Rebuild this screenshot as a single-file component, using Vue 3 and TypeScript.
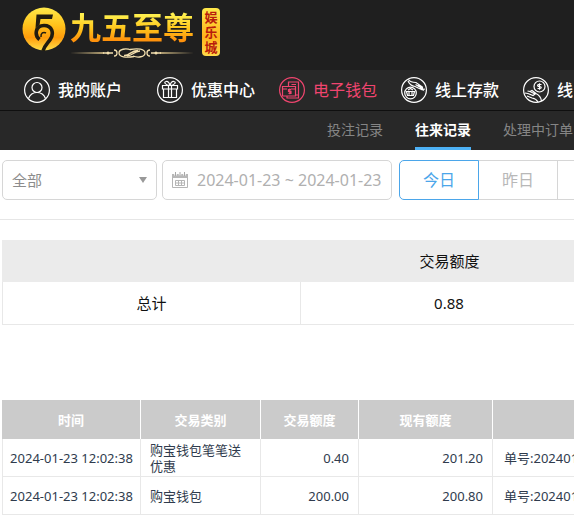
<script setup lang="ts">
import { ref } from 'vue'

interface NavItem { id: string; label: string }
interface Entry { time: string; kind: string; amount: string; balance: string; note: string }

const navItems: NavItem[] = [
  { id: 'account', label: '我的账户' },
  { id: 'promo', label: '优惠中心' },
  { id: 'wallet', label: '电子钱包' },
  { id: 'deposit', label: '线上存款' },
  { id: 'withdraw', label: '线' },
]
const tabs: string[] = ['投注记录', '往来记录', '处理中订单']
const days: string[] = ['今日', '昨日', '']
const entries: Entry[] = [
  { time: '2024-01-23 12:02:38', kind: '购宝钱包笔笔送优惠', amount: '0.40', balance: '201.20', note: '单号:202401' },
  { time: '2024-01-23 12:02:38', kind: '购宝钱包', amount: '200.00', balance: '200.80', note: '单号:202401' },
]

const activeNav = ref('wallet')
const activeTab = ref('往来记录')
const activeDay = ref('今日')
const category = ref('全部')
const range = ref('2024-01-23 ~ 2024-01-23')
</script>

<template>
  <div class="page">
    <header class="top">
      <a class="logo" href="#">
        <svg class="mark" viewBox="0 0 44 44" aria-hidden="true">
          <defs>
            <linearGradient id="gold" x1="0" y1="0" x2="0" y2="1">
              <stop offset="0" stop-color="#ffe94a" />
              <stop offset="0.4" stop-color="#ffc31c" />
              <stop offset="0.7" stop-color="#ff9c0c" />
              <stop offset="1" stop-color="#ffe04a" />
            </linearGradient>
          </defs>
          <circle cx="22" cy="22" r="21.5" fill="url(#gold)" />
          <path d="M14.500 7.500H31L30 12H18.500L17.500 18C15.500 19 14.500 20 13.500 21Z" fill="#211c10" />
          <path d="M17.500 32.500C12 28 13.500 18.500 22 18.500C30.500 18.500 32 26.500 28.500 32C26 36 22.500 38.500 21 44" fill="none" stroke="#211c10" stroke-width="3.600" />
          <path d="M19 30C18.500 26 21.500 24.500 24 26" fill="none" stroke="#211c10" stroke-width="1.500" />
        </svg>
        <span class="brand">
          <span class="name">九五至尊</span>
          <svg class="flourish" viewBox="0 0 124 10" aria-hidden="true">
            <path d="M0 5L34 4.300V5.700ZM124 5L90 4.300V5.700Z" fill="#e9cf92" />
            <g fill="none" stroke="#f3dfae" stroke-width="1.300">
              <path d="M33 5H43M81 5H91M44 2C48 2 48 8 44 8M80 2C76 2 76 8 80 8" />
              <path d="M64 8.500C56 10 49 9 49 5S56 0 61 2M60 1.500C68 0 75 1 75 5S68 10 63 8" />
              <path d="M54 7.500C60 8 61 2 68 2.500M57 8C62 8 64 3 70 3" />
            </g>
            <circle cx="38" cy="5" r="1.500" fill="#f3dfae" />
            <circle cx="86" cy="5" r="1.500" fill="#f3dfae" />
          </svg>
        </span>
        <span class="seal">娱乐城</span>
      </a>
    </header>

    <nav class="main-nav">
      <a
        v-for="item in navItems"
        :key="item.id"
        href="#"
        :class="['nav-link', item.id, { active: item.id === activeNav }]"
        @click.prevent="activeNav = item.id"
      >
        <svg class="nav-icon" viewBox="0 0 26 26" aria-hidden="true">
          <circle cx="13" cy="13" r="12.400" />
          <g v-if="item.id === 'account'">
            <circle cx="13" cy="10.500" r="5" />
            <path d="M4.500 21.500C6 17.500 9 15.500 13 15.500S20 17.500 21.500 21.500" />
          </g>
          <g v-else-if="item.id === 'promo'">
            <path d="M5.500 8.500H20.500V12H5.500ZM6.500 12V20.500H19.500V12M11.500 8.500V20.500M14.500 8.500V20.500" />
            <path d="M13 8.500C8 8 6.500 5 9 4.500C11 4 12.500 6 13 8.500C13.500 6 15 4 17 4.500C19.500 5 18 8 13 8.500" />
          </g>
          <g v-else-if="item.id === 'wallet'">
            <path d="M3.500 9.500H16.500V19H3.500ZM3.500 12H8M12 12H16.500M9.500 9.500V5H19.500V21H8V19M12.500 7.500H17M16.500 18H19.500" />
            <path d="M12 12.500H9.500V14.300H12V16.300H9.500M10.800 11.500V17.300" />
          </g>
          <g v-else-if="item.id === 'deposit'">
            <circle cx="9.500" cy="16" r="5.800" />
            <path d="M5.500 14.500H13.500L12.500 18.500H6.500ZM8 14.500V18.500M11 14.500V18.500M7 13L9.500 11.500L12 13" />
            <path d="M7.500 2.500C9 5 11 5.500 15 5.500L22 10.500M7 4C8.500 7.500 11 9 14 9.500L20.500 12.500L19.500 10.500L14.500 7.500M19.500 10.500L22 12.500L21 10L17 7.500M22 12.500L24 12" />
          </g>
          <g v-else>
            <circle cx="16.500" cy="9.500" r="5.500" />
            <path d="M18.500 7.500H15.500C14 8 14.500 9.500 16.500 9.500C19 9.800 18.500 11.500 17 11.500H14.500M16.500 6.300V12.700" />
            <path d="M2 16L5 16.500L10 18.500L12 17L7 14.500L4.500 14M7 14.500L9 13.500L13 16.500C16 18 18 20 18.500 24M4 19L9 21C12 21.500 14 23 15 25" />
          </g>
        </svg>
        <span>{{ item.label }}</span>
      </a>
    </nav>

    <nav class="sub-nav">
      <a
        v-for="tab in tabs"
        :key="tab"
        href="#"
        :class="['tab', { active: tab === activeTab }]"
        @click.prevent="activeTab = tab"
      >{{ tab }}</a>
    </nav>

    <main class="content">
      <form class="filters" @submit.prevent>
        <label class="field category">
          <select v-model="category" aria-label="全部">
            <option>全部</option>
          </select>
          <svg class="caret" viewBox="0 0 8 6" aria-hidden="true"><path d="M0 0H8L4 6Z" /></svg>
        </label>
        <label class="field range">
          <svg class="calendar" viewBox="0 0 18 18" aria-hidden="true">
            <path d="M1.500 3.500H16.500V16.500H1.500Z" fill="none" stroke="#b5b5b5" />
            <path d="M1 3H17V7H1Z" fill="#b8b8b8" />
            <path d="M4.500 1V4.500M9 1V4.500M13.500 1V4.500" stroke="#fff" stroke-width="2.500" />
            <path d="M4.500 1V5M9 1V5M13.500 1V5" stroke="#a8a8a8" />
            <path d="M4.500 9.500H13.500V14.500H4.500ZM4.500 12H13.500M7.500 9.500V14.500M10.500 9.500V14.500" fill="none" stroke="#b5b5b5" />
          </svg>
          <input v-model="range" type="text" aria-label="2024-01-23 ~ 2024-01-23" />
        </label>
        <div class="days">
          <button
            v-for="day in days"
            :key="day"
            type="button"
            :class="['day', { active: day === activeDay }]"
            @click="activeDay = day"
          >{{ day }}</button>
        </div>
      </form>

      <table class="summary">
        <colgroup><col class="w-total" /><col class="w-value" /></colgroup>
        <thead>
          <tr><th></th><th>交易额度</th></tr>
        </thead>
        <tbody>
          <tr><td>总计</td><td>0.88</td></tr>
        </tbody>
      </table>

      <table class="records">
        <colgroup>
          <col class="w-time" /><col class="w-kind" /><col class="w-amount" /><col class="w-balance" /><col class="w-note" />
        </colgroup>
        <thead>
          <tr><th>时间</th><th>交易类别</th><th>交易额度</th><th>现有额度</th><th></th></tr>
        </thead>
        <tbody>
          <tr v-for="(entry, i) in entries" :key="i">
            <td class="time">{{ entry.time }}</td>
            <td class="kind">{{ entry.kind }}</td>
            <td class="num">{{ entry.amount }}</td>
            <td class="num">{{ entry.balance }}</td>
            <td class="note">{{ entry.note }}</td>
          </tr>
        </tbody>
      </table>
    </main>
  </div>
</template>

<style>
body {
  background: #fff;
  overflow-x: hidden;
}
</style>

<style scoped>
.page {
  overflow: hidden;
  font-family: "Noto Sans", "Noto Sans CJK SC", sans-serif;
  color: #111;
}
.page * {
  box-sizing: border-box;
}
a {
  text-decoration: none;
  color: inherit;
}
.top {
  height: 70px;
  padding: 7px 22px;
  background: #1f1f1f;
}
.logo {
  display: flex;
  align-items: flex-start;
}
.mark {
  width: 44px;
  height: 44px;
  flex: none;
}
.brand {
  display: flex;
  flex-direction: column;
  margin-left: 4px;
}
.name {
  height: 39px;
  font: 700 31px/38px "Noto Sans CJK SC", sans-serif;
  color: transparent;
  background: linear-gradient(#fff04e 20%, #ffc61c 55%, #ff920c 85%);
  background-clip: text;
}
.flourish {
  width: 124px;
  height: 10px;
  margin-top: 2px;
}
.seal {
  width: 18px;
  height: 48px;
  padding-top: 1px;
  margin: 1px 0 0 8px;
  border-radius: 4px;
  background: linear-gradient(#ffe94a, #ffb31c 60%, #ffd94a);
  color: #b81c0c;
  font: 700 13px/15px "Noto Sans CJK SC", sans-serif;
  text-align: center;
  word-break: break-all;
}
.main-nav {
  display: flex;
  align-items: center;
  gap: 24px;
  height: 41px;
  padding-left: 24px;
  background: #282828;
  border-bottom: 1px solid #0f0f0f;
}
.nav-link {
  display: flex;
  align-items: center;
  gap: 8px;
  flex: none;
  color: #fff;
  font-size: 16px;
  font-weight: 500;
  line-height: 24px;
}
.nav-link.account {
  margin-right: 11px;
}
.nav-link.active {
  color: #f0456f;
  font-weight: 400;
}
.nav-icon {
  width: 26px;
  height: 26px;
  fill: none;
  stroke: currentColor;
  stroke-width: 1.2;
}
.sub-nav {
  display: flex;
  gap: 32px;
  height: 39px;
  padding-left: 327px;
  background: #282828;
}
.tab {
  flex: none;
  color: #858585;
  font-size: 14px;
  line-height: 38px;
}
.tab.active {
  color: #fff;
  font-weight: 700;
  border-bottom: 3px solid #4db1f5;
}
.content {
  padding: 10px 0 0 2px;
}
.filters {
  display: flex;
  margin-left: -2px;
  padding: 0 0 19px 2px;
  border-bottom: 1px solid #e6e6e6;
}
.field {
  display: flex;
  align-items: center;
  flex: none;
  height: 40px;
  border: 1px solid #d6d6d6;
  border-radius: 5px;
  background: #fff;
}
.category {
  width: 155px;
  margin-right: 5px;
  padding: 0 9px;
}
.category select {
  flex: 1;
  min-width: 0;
  padding: 0;
  border: 0;
  appearance: none;
  background: none;
  color: #8c8c8c;
  font: 15px/24px "Noto Sans", "Noto Sans CJK SC", sans-serif;
}
.caret {
  width: 8px;
  height: 6px;
  fill: #999;
}
.range {
  width: 230px;
  margin-right: 7px;
  padding: 0 4px 0 8px;
  gap: 8px;
}
.calendar {
  width: 18px;
  height: 18px;
  flex: none;
}
.range input {
  flex: 1;
  min-width: 0;
  padding: 0;
  border: 0;
  background: none;
  color: #b0b0b0;
  font: 16px/24px "Noto Sans", "Noto Sans CJK SC", sans-serif;
}
.days {
  display: flex;
  flex: none;
}
.day {
  width: 80px;
  height: 40px;
  margin-right: -1px;
  border: 1px solid #d6d6d6;
  background: #fff;
  color: #b8b8b8;
  font: 16px/24px "Noto Sans", "Noto Sans CJK SC", sans-serif;
}
.day.active {
  position: relative;
  border-color: #4ba6ea;
  border-radius: 5px 0 0 5px;
  color: #4ba6ea;
}
table {
  table-layout: fixed;
  border-collapse: separate;
  border-spacing: 0;
}
th {
  padding: 0;
}
.summary {
  width: 596px;
  margin-top: 20px;
  font-size: 15px;
  line-height: 24px;
  text-align: center;
}
.summary th {
  height: 42px;
  background: #ebebeb;
  font-weight: 400;
}
.summary td {
  height: 43px;
  padding: 0;
  border-right: 1px solid #e8e8e8;
  border-bottom: 1px solid #e8e8e8;
}
.summary td:first-child {
  border-left: 1px solid #e8e8e8;
}
.w-total { width: 299px; }
.w-value { width: 297px; }
.records {
  width: 690px;
  margin-top: 75px;
  font-size: 13px;
  line-height: 16px;
  color: #2f3b4d;
}
.w-time { width: 139px; }
.w-kind { width: 120px; }
.w-amount { width: 98px; }
.w-balance { width: 134px; }
.w-note { width: 199px; }
.records th {
  height: 39px;
  background: #cbcbcb;
  border-right: 1px solid #fff;
  color: #fff;
  font-weight: 700;
}
.records td {
  height: 38px;
  padding: 0 9px;
  border-right: 1px solid #e8e8e8;
  border-bottom: 1px solid #e8e8e8;
}
.records td:first-child {
  border-left: 1px solid #e8e8e8;
}
.records .time {
  padding: 0;
  text-align: center;
  white-space: nowrap;
}
.records .num {
  text-align: right;
}
.records .note {
  padding-left: 11px;
  white-space: nowrap;
}
</style>
